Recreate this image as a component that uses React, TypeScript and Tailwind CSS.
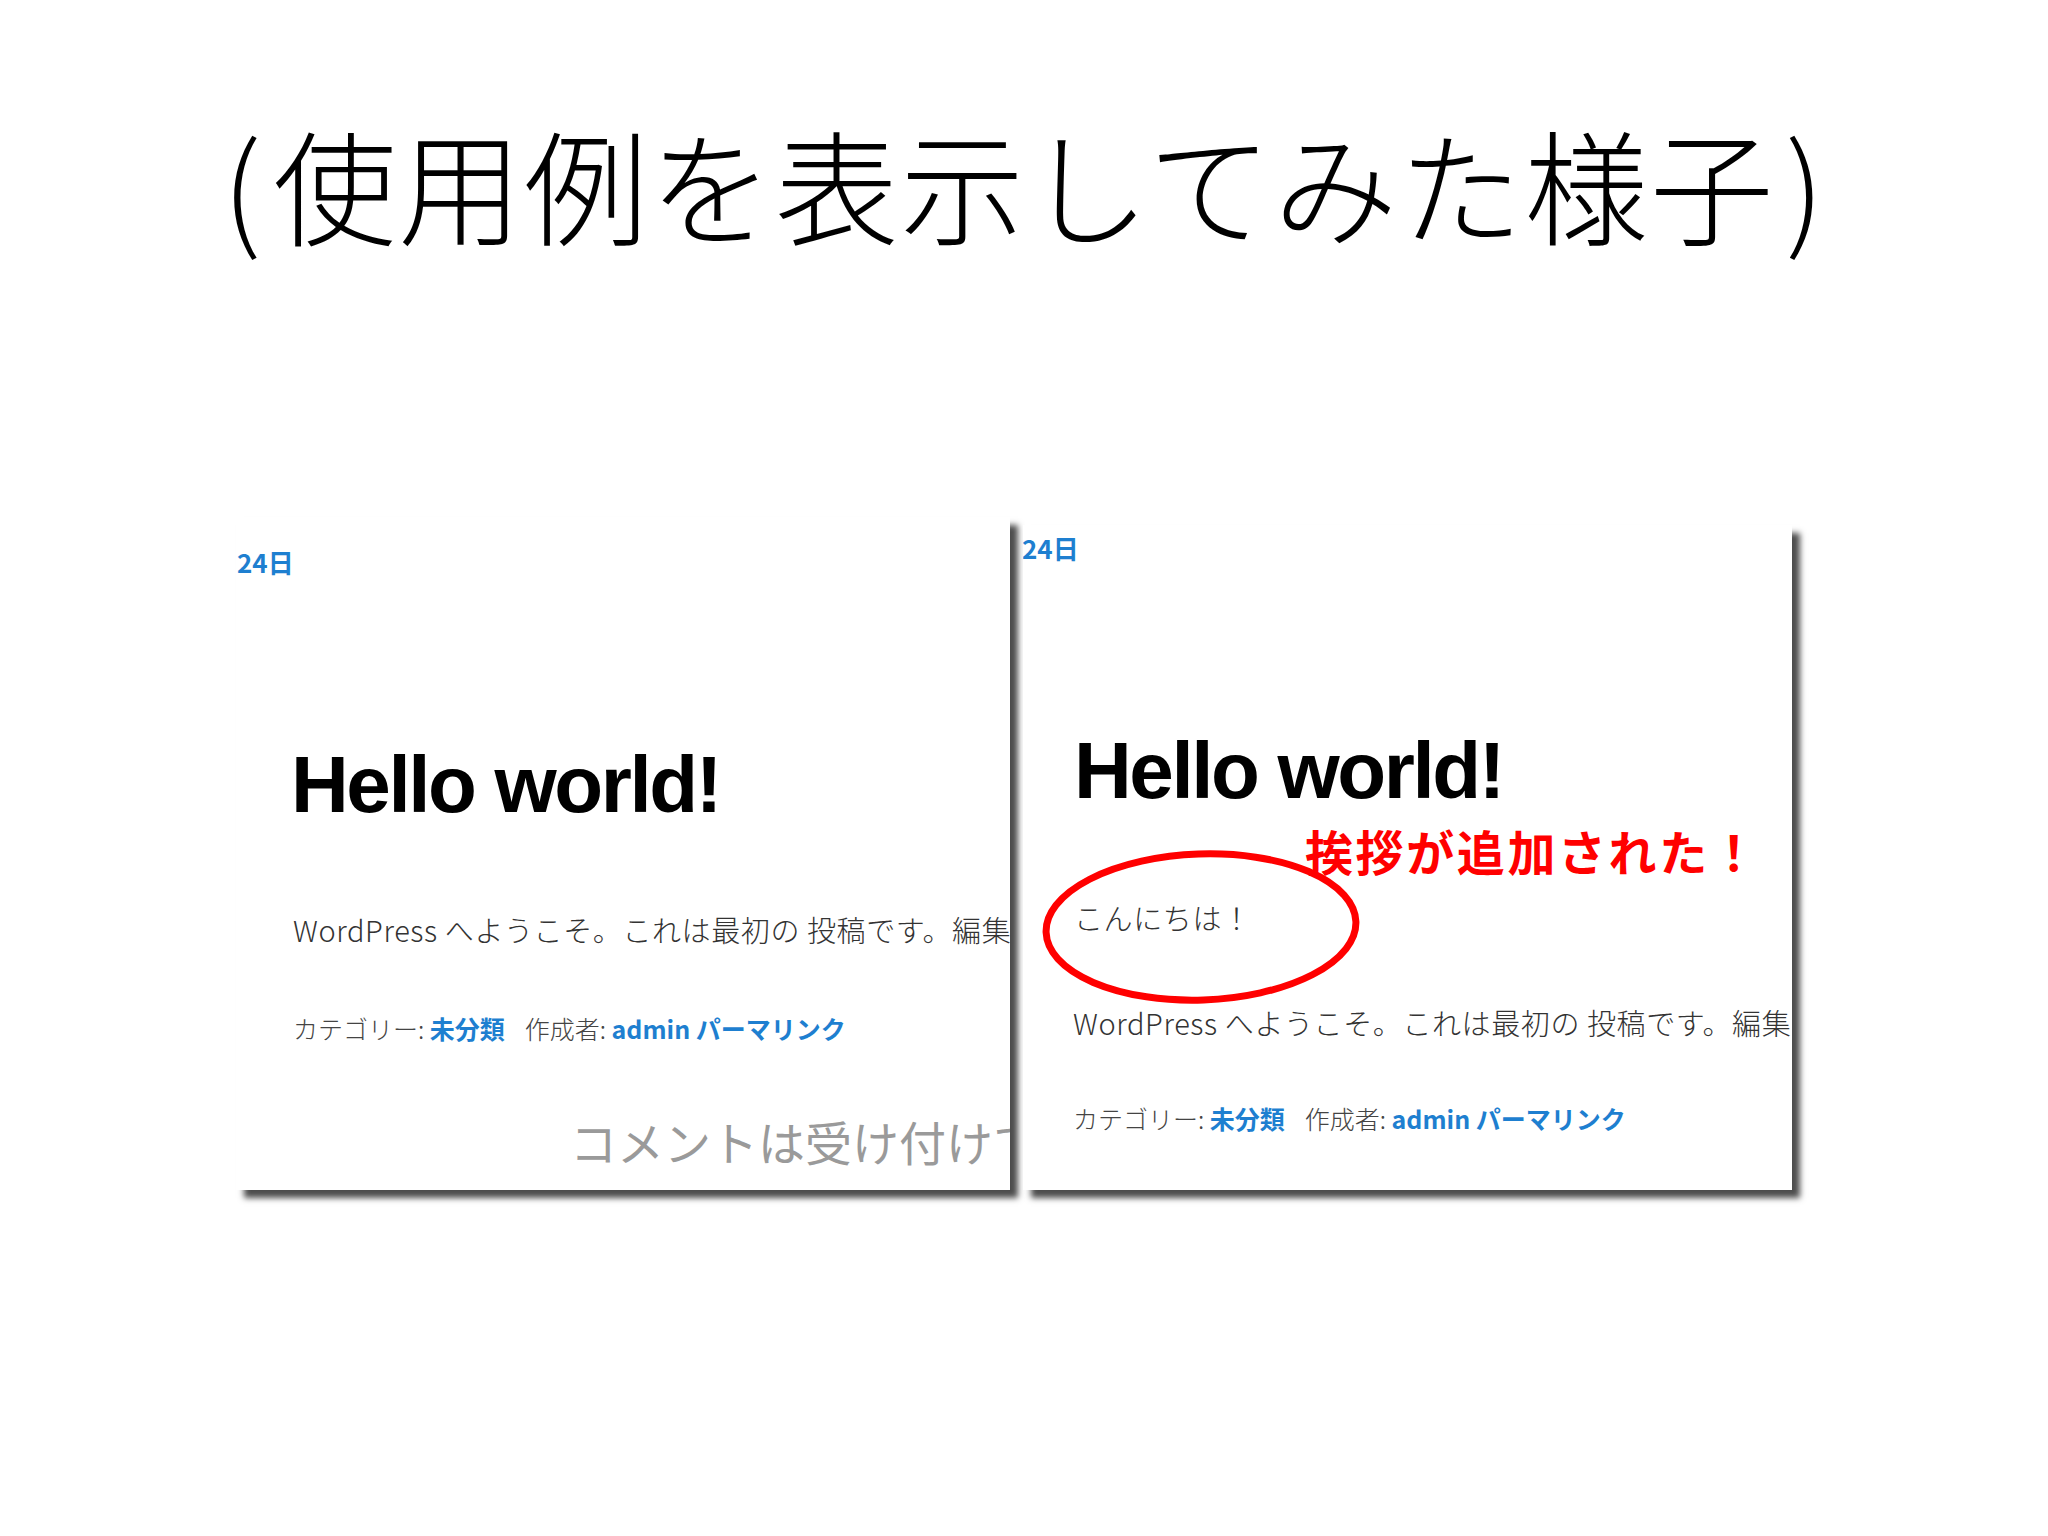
import React from "react";

const jp = "font-['Noto_Sans_CJK_JP',sans-serif]";

function Meta() {
  return (
    <div className={`${jp} whitespace-nowrap text-[25px] leading-none text-[#444]`}>
      <span className="font-light">カテゴリー: </span>
      <span className="font-bold text-[#1e7fd0]">未分類</span>
      <span className="ml-[20px] font-light">作成者: </span>
      <span className="font-bold text-[#1e7fd0]">admin パーマリンク</span>
    </div>
  );
}

function Body() {
  return (
    <div
      className={`${jp} whitespace-nowrap text-[29px] leading-none font-light tracking-[0.6px] text-[#333]`}
    >
      WordPress へようこそ。これは最初の 投稿です。編集もしくは削除してブログを始めてください !
    </div>
  );
}

function Hello() {
  return (
    <div className="whitespace-nowrap font-['Liberation_Sans',Arial,sans-serif] text-[80px] font-bold leading-none tracking-[-2.4px] text-black">
      Hello world!
    </div>
  );
}

function DateLabel() {
  return (
    <div className={`${jp} text-[26px] font-bold leading-none text-[#1e7fd0]`}>24日</div>
  );
}

export default function App() {
  return (
    <div className="relative h-[1536px] w-[2048px] overflow-hidden bg-white">
      <div
        className={`pt-[120px] text-center text-[124px] leading-none font-light tracking-[1.5px] text-black ${jp}`}
      >
        <span className="mr-[10px]">(</span>使用例を表示してみた様子<span className="ml-[10px]">)</span>
      </div>

      <div className="mt-[273px] flex items-start pl-[236px]">
        {/* left screenshot */}
        <div className="flex h-[673px] w-[774px] flex-col overflow-hidden bg-white shadow-[8px_8px_6px_rgba(0,0,0,0.7)]">
          <div className="mt-[32px] ml-[1px]">
            <DateLabel />
          </div>
          <div className="mt-[170px] ml-[55px]">
            <Hello />
          </div>
          <div className="mt-[90px] ml-[57px]">
            <Body />
          </div>
          <div className="mt-[72px] ml-[57px]">
            <Meta />
          </div>
          <div
            className={`mt-[76px] ml-[334px] whitespace-nowrap text-[47px] leading-none text-[#9a9a9a] ${jp}`}
          >
            コメントは受け付けていません。
          </div>
        </div>

        {/* right screenshot */}
        <div className="relative mt-[8px] ml-[13px] flex h-[665px] w-[769px] flex-col overflow-hidden bg-white shadow-[8px_8px_6px_rgba(0,0,0,0.7)]">
          <div className="mt-[10px] ml-[-1px]">
            <DateLabel />
          </div>
          <div className="mt-[170px] ml-[51px]">
            <Hello />
          </div>
          <div
            className={`mt-[92px] ml-[51px] whitespace-nowrap text-[29px] leading-none font-light tracking-[0.6px] text-[#333] ${jp}`}
          >
            こんにちは！
          </div>
          <div className="mt-[76px] ml-[50px]">
            <Body />
          </div>
          <div className="mt-[69px] ml-[50px]">
            <Meta />
          </div>

          <svg
            className="absolute left-[18px] top-[323px]"
            width="320"
            height="158"
            viewBox="0 0 320 158"
          >
            <ellipse
              cx="160"
              cy="79"
              rx="155"
              ry="73"
              fill="none"
              stroke="#f00"
              strokeWidth="7"
              transform="rotate(-2 160 79)"
            />
          </svg>
          <div
            className={`absolute left-[282px] top-[301px] whitespace-nowrap text-[48px] font-bold leading-none tracking-[2.6px] text-[#f00] ${jp}`}
          >
            挨拶が追加された！
          </div>
        </div>
      </div>
    </div>
  );
}
